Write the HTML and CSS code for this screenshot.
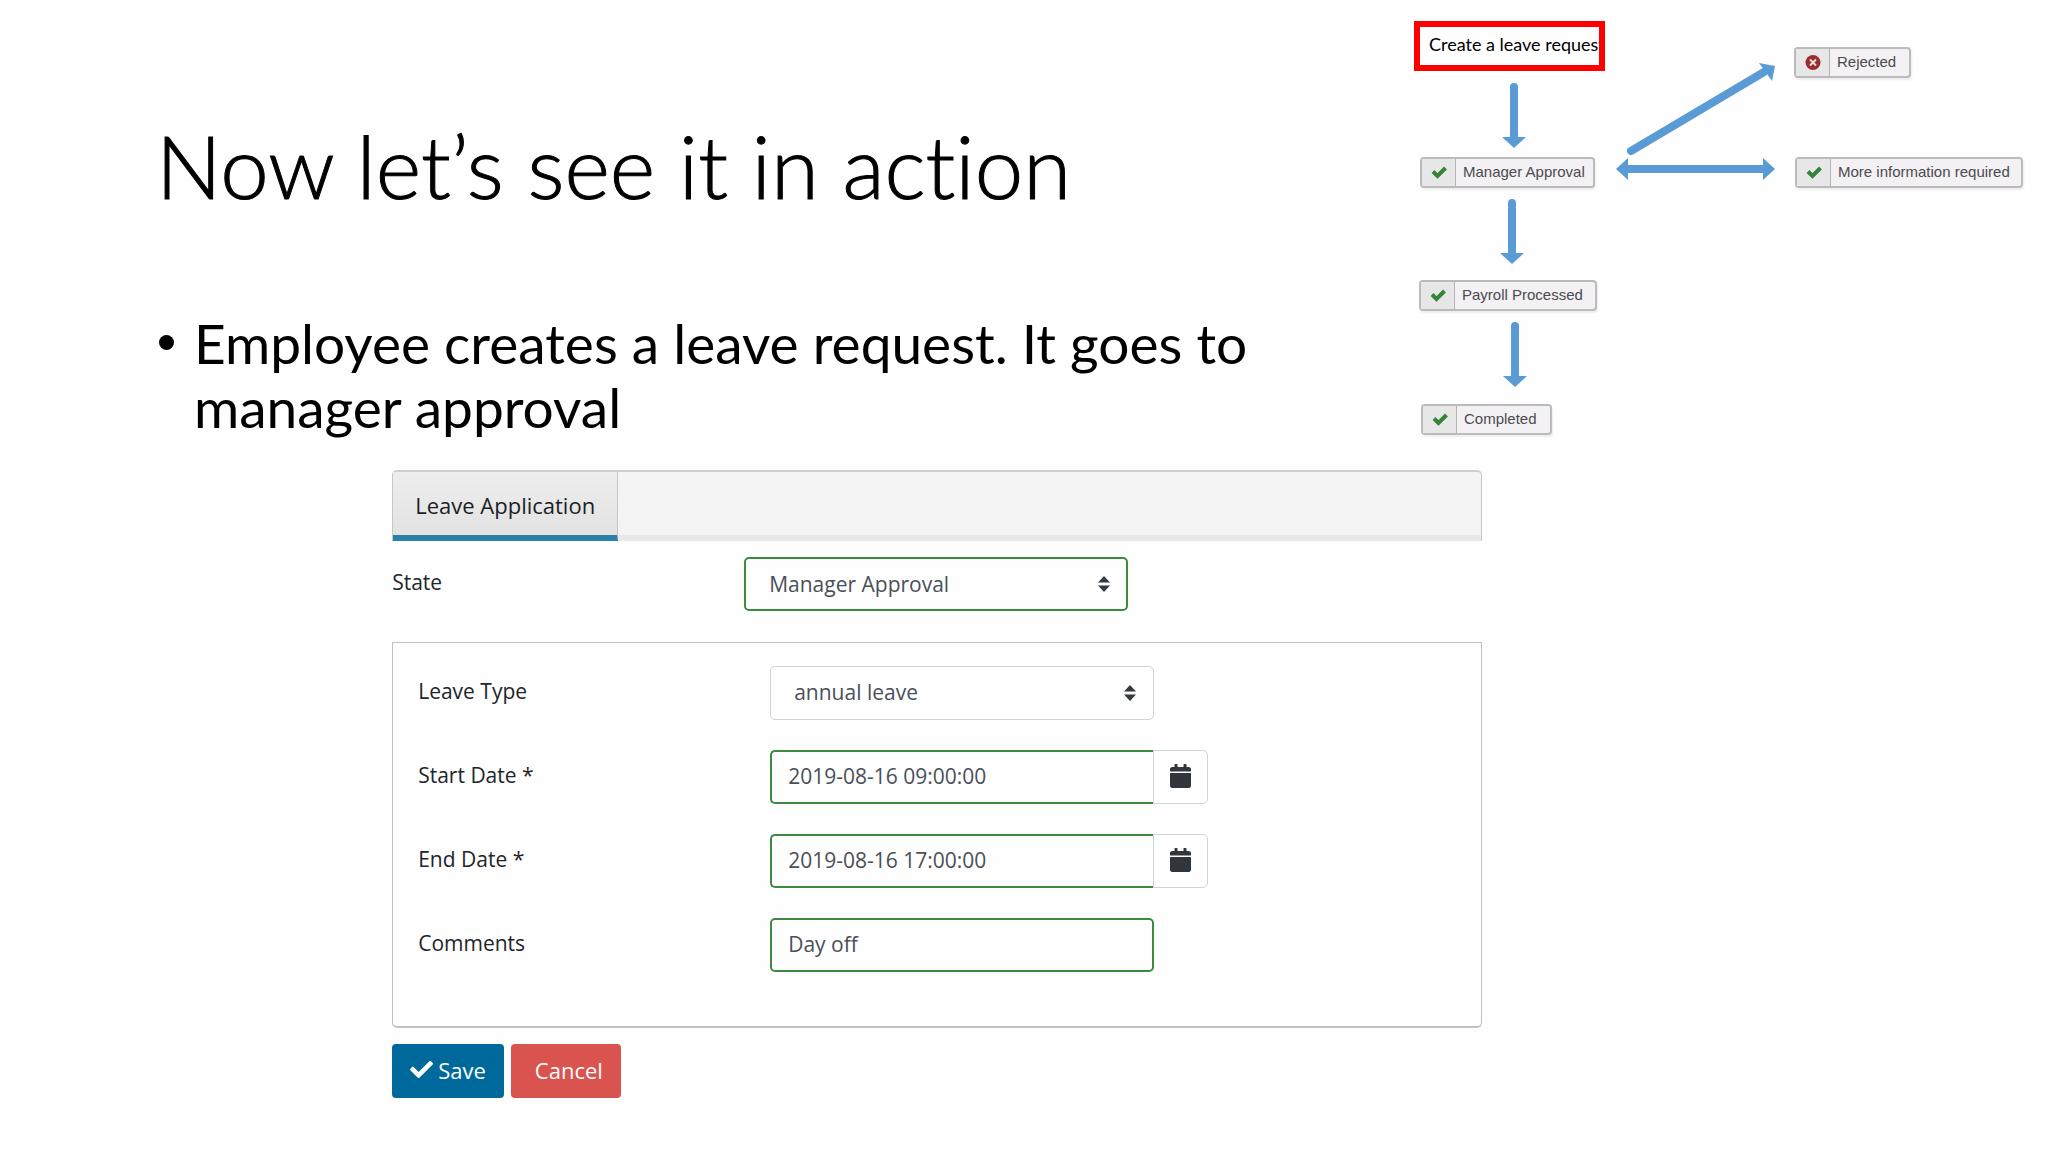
FILE: index.html
```html
<!DOCTYPE html>
<html lang="en">
<head>
<meta charset="utf-8">
<title>Now let’s see it in action</title>
<link rel="stylesheet" href="styles.css">
</head>
<body>
<svg class="symbols" aria-hidden="true">
  <symbol id="check" viewBox="0 0 512 512"><path fill="currentColor" d="M173.900 439.400l-166.400-166.400c-10-10-10-26.200 0-36.200l36.200-36.200c10-10 26.200-10 36.200 0L192 312.700 432.100 72.600c10-10 26.200-10 36.200 0l36.200 36.200c10 10 10 26.200 0 36.200l-294.400 294.400c-10 10-26.200 10-36.200 0z"/></symbol>
  <symbol id="check-bold" viewBox="0 0 16 16"><path fill="none" stroke="currentColor" stroke-width="4" d="M2 6.500L6.500 11L14.500 3"/></symbol>
  <symbol id="calendar" viewBox="0 0 448 512"><path fill="currentColor" d="M12 192h424c6.600 0 12 5.400 12 12v260c0 26.500-21.500 48-48 48H48c-26.500 0-48-21.500-48-48V204c0-6.600 5.400-12 12-12zm436-44v-36c0-26.500-21.500-48-48-48h-48V12c0-6.600-5.400-12-12-12h-40c-6.600 0-12 5.400-12 12v52H160V12c0-6.600-5.400-12-12-12h-40c-6.600 0-12 5.400-12 12v52H48C21.500 64 0 85.500 0 112v36c0 6.600 5.400 12 12 12h424c6.600 0 12-5.400 12-12z"/></symbol>
  <symbol id="caret" viewBox="0 0 12 16"><path fill="#343a40" d="M6 0l6 6.500H0zM6 16L0 9.500h12z"/></symbol>
</svg>
<main class="slide">
  <header class="top">
    <div class="intro">
      <h1 class="title">Now let’s see it in action</h1>
      <ul class="points">
        <li>Employee creates a leave request. It goes to manager approval</li>
      </ul>
    </div>
    <div class="diagram">
      <svg class="arrows" viewBox="0 0 648 450" aria-hidden="true">
        <g fill="none" stroke="#5b9bd5" stroke-width="8" stroke-linecap="round">
          <path d="M114 87V140"/>
          <path d="M112 203V256"/>
          <path d="M115 326V379"/>
          <path d="M231 151L364 72"/>
          <path stroke-linecap="butt" d="M225 169H366"/>
        </g>
        <g fill="#5b9bd5">
          <path d="M102 137H126L114 148Z"/>
          <path d="M100 253H124L112 264Z"/>
          <path d="M103 376H127L115 387Z"/>
          <path d="M359 63L375 66L372 81Z"/>
          <path d="M216 169L228 158V180Z"/>
          <path d="M375 169L363 158V180Z"/>
        </g>
      </svg>
      <div class="start">Create a leave request</div>
      <div class="node node-manager"><span class="mark"><svg><use href="#check-bold"/></svg></span><span class="name">Manager Approval</span></div>
      <div class="node node-payroll"><span class="mark"><svg><use href="#check-bold"/></svg></span><span class="name">Payroll Processed</span></div>
      <div class="node node-completed"><span class="mark"><svg><use href="#check-bold"/></svg></span><span class="name">Completed</span></div>
      <div class="node node-rejected"><span class="mark"><svg viewBox="0 0 16 16"><circle cx="8" cy="7.500" r="7.500" fill="#9c2b2e"/><path d="M5 4.500l6 6M11 4.500l-6 6" stroke="#f0dede" stroke-width="2"/></svg></span><span class="name">Rejected</span></div>
      <div class="node node-info"><span class="mark"><svg><use href="#check-bold"/></svg></span><span class="name">More information required</span></div>
    </div>
  </header>

  <form class="form">
    <nav class="tabs"><a class="tab" href="#leave">Leave Application</a></nav>
    <div class="row">
      <label for="state">State</label>
      <div class="picker">
        <select id="state" class="control valid"><option>Manager Approval</option></select>
        <svg class="caret"><use href="#caret"/></svg>
      </div>
    </div>
    <section class="panel" id="leave">
      <div class="row">
        <label for="type">Leave Type</label>
        <div class="picker">
          <select id="type" class="control"><option>annual leave</option></select>
          <svg class="caret"><use href="#caret"/></svg>
        </div>
      </div>
      <div class="row">
        <label for="start">Start Date *</label>
        <div class="group">
          <input id="start" class="control valid" type="text" value="2019-08-16 09:00:00">
          <button class="addon" type="button" aria-label="Pick start date"><svg><use href="#calendar"/></svg></button>
        </div>
      </div>
      <div class="row">
        <label for="end">End Date *</label>
        <div class="group">
          <input id="end" class="control valid" type="text" value="2019-08-16 17:00:00">
          <button class="addon" type="button" aria-label="Pick end date"><svg><use href="#calendar"/></svg></button>
        </div>
      </div>
      <div class="row">
        <label for="comments">Comments</label>
        <input id="comments" class="control valid" type="text" value="Day off">
      </div>
    </section>
    <div class="actions">
      <button class="button save" type="button"><svg><use href="#check"/></svg>Save</button>
      <button class="button cancel" type="button">Cancel</button>
    </div>
  </form>
</main>
</body>
</html>
```
FILE: styles.css
```css
* { box-sizing: border-box; }

body {
  margin: 0;
  background: #fefefe;
  color: #000;
  font-family: Lato, "Liberation Sans", sans-serif;
  font-variant-ligatures: none;
}

.symbols { display: none; }

.top {
  display: flex;
  justify-content: space-between;
  min-height: 470px;
}

.intro {
  flex: 0 1 1280px;
  padding: 110px 0 0 156px;
}

.title {
  margin: 0;
  font-size: 87px;
  font-weight: 300;
  line-height: 112px;
  -webkit-text-stroke: 1px #000;
}

.points {
  margin: 0;
  padding: 89px 0 0;
  font-size: 55px;
  line-height: 64px;
  list-style: none;
}

.points li {
  display: flex;
  gap: 20px;
}

.points li::before {
  content: "";
  flex: none;
  width: 15px;
  height: 15px;
  margin: 24px 0 0 3px;
  border-radius: 50%;
  background: #000;
}

/* Workflow diagram: a free canvas */
.diagram {
  position: relative;
  flex: 0 0 648px;
  height: 450px;
}

.arrows {
  position: absolute;
  inset: 0;
  width: 648px;
  height: 450px;
}

.start {
  position: absolute;
  left: 14px;
  top: 21px;
  width: 191px;
  height: 50px;
  padding: 0 0 0 9px;
  overflow: hidden;
  border: 6px solid #fe0000;
  font-size: 18px;
  line-height: 34px;
  white-space: nowrap;
}

.node {
  position: absolute;
  display: flex;
  height: 31px;
  border: 2px solid #bbb;
  border-radius: 4px;
  background: #f3f1f3;
  box-shadow: 1px 2px 2px #eee;
  color: #4b4b4f;
  font-family: "Liberation Sans", Arial, sans-serif;
  font-size: 15px;
  line-height: 26px;
  white-space: nowrap;
}

.node-manager { left: 20px; top: 157px; width: 175px; }
.node-payroll { left: 19px; top: 280px; width: 178px; }
.node-completed { left: 21px; top: 404px; width: 131px; }
.node-rejected { left: 394px; top: 47px; width: 117px; }
.node-info { left: 395px; top: 157px; width: 228px; }

.mark {
  display: flex;
  align-items: center;
  justify-content: center;
  flex: 0 0 34px;
  border-right: 1px solid #b4b4b4;
  background: #e8e7e8;
  color: #36833a;
}

.mark svg { width: 16px; height: 16px; }

.name { padding-left: 7px; }

/* Leave form */
.form {
  width: 53.2%;
  margin-left: 19.15%;
  color: #212529;
  font-family: "Open Sans", "Noto Sans", sans-serif;
  font-size: 21px;
}

.tabs {
  display: flex;
  height: 71px;
  border: 1px solid #c8c6c8;
  border-top: 2px solid #cfcfcf;
  border-bottom: 0;
  border-radius: 5px 5px 0 0;
  background: #f5f4f5;
  box-shadow: inset 0 -6px 0 #e9e7e9;
}

.tab {
  padding: 0 22px;
  border-right: 1px solid #c8c6c8;
  border-bottom: 6px solid #2c7fa6;
  background: linear-gradient(#eee, #e2e2e2);
  color: #1b1e28;
  font-size: 22px;
  line-height: 66px;
  text-decoration: none;
}

.row {
  display: grid;
  grid-template-columns: 352px 384px;
  align-items: start;
  line-height: 50px;
}

.tabs + .row { margin-top: 16px; }

.control {
  width: 384px;
  height: 54px;
  padding: 0 17px;
  border: 1px solid #ced4da;
  border-radius: 5px;
  background: #fefeff;
  color: #495057;
  font: inherit;
  outline: 0;
}

.control.valid { border: 2px solid #3f8a43; padding: 0 16px 2px; }

.picker { display: grid; align-items: center; }
.picker > * { grid-area: 1 / 1; }

select.control,
select.control.valid {
  appearance: none;
  padding: 0 23px 3px;
}

.caret {
  justify-self: end;
  width: 12px;
  height: 16px;
  margin-right: 18px;
  pointer-events: none;
}

.panel {
  display: grid;
  gap: 30px;
  margin-top: 31px;
  padding: 23px 25px 54px;
  border: 1px solid #c4c0c4;
  border-bottom-width: 2px;
  border-radius: 0 0 5px 5px;
  background: #fefefe;
}

.group { display: flex; width: 438px; }

.group .control {
  border-right: 0;
  border-radius: 5px 0 0 5px;
}

.addon {
  display: flex;
  align-items: center;
  justify-content: center;
  flex: 0 0 55px;
  height: 54px;
  padding: 0 0 2px;
  border: 1px solid #ced4da;
  border-radius: 0 5px 5px 0;
  background: #fefefe;
  color: #30363b;
}

.addon svg { width: 21px; height: 24px; }

.actions {
  display: flex;
  gap: 7px;
  margin-top: 16px;
}

.button {
  display: flex;
  align-items: center;
  height: 54px;
  padding: 0 18px 3px;
  border: 0;
  border-radius: 4px;
  color: #fff;
  font: inherit;
  font-size: 22px;
}

.save { gap: 5px; background: #00699b; }
.save svg { width: 23px; height: 23px; }
.cancel { padding-left: 24px; background: #d9534f; }
```
